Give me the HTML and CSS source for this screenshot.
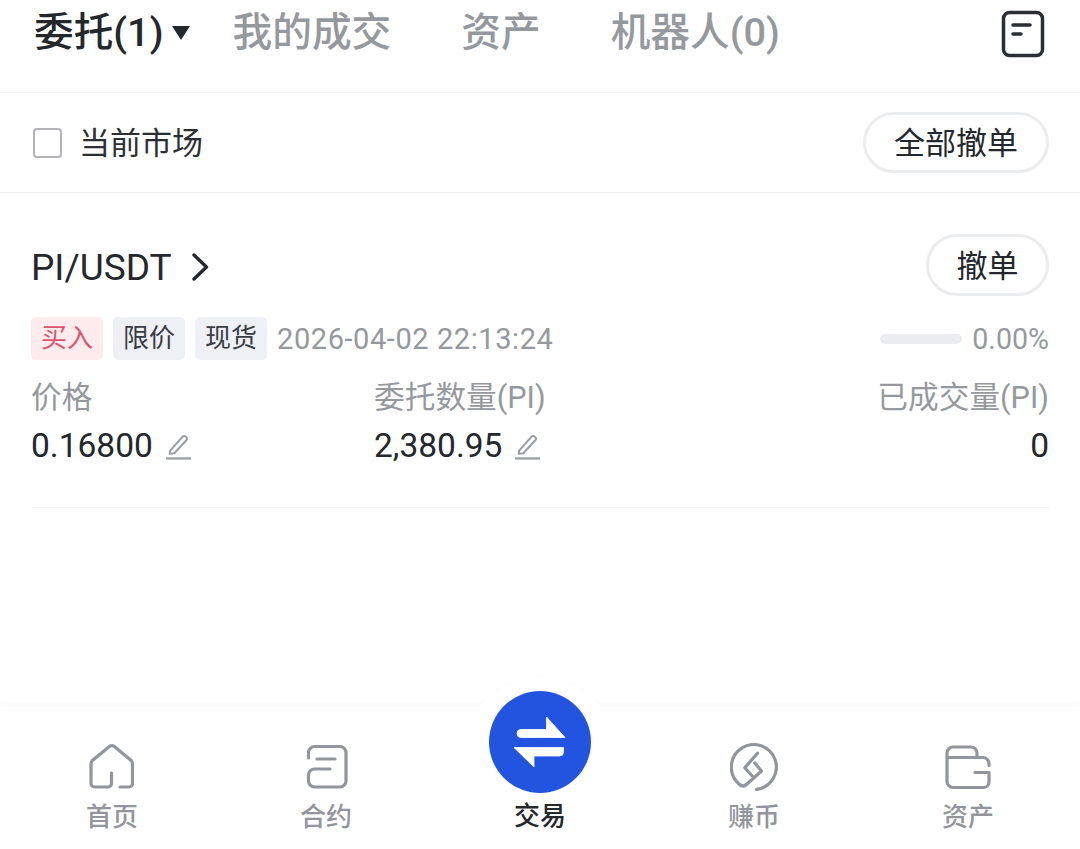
FILE: index.html
```html
<!DOCTYPE html>
<html lang="zh-CN">
<head>
    <meta charset="UTF-8">
    <meta name="viewport" content="width=device-width, initial-scale=1.0">
    <title>委托</title>
    <link rel="stylesheet" href="styles.css">
</head>
<body>
    <div class="page">
        <div class="tabs">
            <span class="tab active">委托(1)</span>
            <span class="caret"></span>
            <span class="tab">我的成交</span>
            <span class="tab">资产</span>
            <span class="tab">机器人(0)</span>
            <svg class="order-icon" width="44" height="48" viewBox="0 0 44 48">
                <rect x="2.5" y="2.5" width="39" height="43" rx="6" fill="none" stroke="#2b2e33" stroke-width="3.5"/>
                <path d="M12 15 H29 M12 24 H20" fill="none" stroke="#2b2e33" stroke-width="3.5" stroke-linecap="round"/>
            </svg>
        </div>

        <div class="filter">
            <label class="check"><span class="box"></span>当前市场</label>
            <button class="pill pill-all" type="button">全部撤单</button>
        </div>

        <div class="order">
            <div class="order-head">
                <div class="pair">PI/USDT
                    <svg width="18" height="30" viewBox="0 0 18 30"><path d="M3 3 L15.500 15 L3 27" fill="none" stroke="#24272c" stroke-width="3.400" stroke-linecap="round" stroke-linejoin="round"/></svg>
                </div>
                <button class="pill pill-cancel" type="button">撤单</button>
            </div>

            <div class="order-meta">
                <span class="tag tag-buy">买入</span>
                <span class="tag">限价</span>
                <span class="tag">现货</span>
                <span class="date">2026-04-02 22:13:24</span>
                <span class="progress"></span>
                <span class="percent">0.00%</span>
            </div>

            <div class="order-grid">
                <div class="cell">
                    <div class="label">价格</div>
                    <div class="value">0.16800
                        <svg class="edit" width="27" height="27" viewBox="0 0 26 26"><path d="M5 17 L17 3.500 a2 2 0 0 1 3 0 l0.500 0.500 a2 2 0 0 1 0 3 L9 19.500 L4.500 20 Z" fill="none" stroke="#9a9ea3" stroke-width="2" stroke-linejoin="round"/><path d="M1 24.500 H25" stroke="#9a9ea3" stroke-width="2.200"/></svg>
                    </div>
                </div>
                <div class="cell">
                    <div class="label">委托数量(PI)</div>
                    <div class="value">2,380.95
                        <svg class="edit" width="27" height="27" viewBox="0 0 26 26"><path d="M5 17 L17 3.500 a2 2 0 0 1 3 0 l0.500 0.500 a2 2 0 0 1 0 3 L9 19.500 L4.500 20 Z" fill="none" stroke="#9a9ea3" stroke-width="2" stroke-linejoin="round"/><path d="M1 24.500 H25" stroke="#9a9ea3" stroke-width="2.200"/></svg>
                    </div>
                </div>
                <div class="cell cell-right">
                    <div class="label">已成交量(PI)</div>
                    <div class="value">0</div>
                </div>
            </div>
        </div>

        <nav class="nav">
            <a class="nav-item">
                <svg width="48" height="48" viewBox="0 0 48 48"><path d="M32 44 H41 a3.500 3.500 0 0 0 3.500-3.500 V21 a5 5 0 0 0-1.400-3.600 L26.400 3.600 a4 4 0 0 0-5 0 L4.400 17.400 A5 5 0 0 0 3 21 V40.500 a3.500 3.500 0 0 0 3.500 3.500 H20 a3.500 3.500 0 0 0 3.500-3.500 V30" fill="none" stroke="#92959b" stroke-width="3.200" stroke-linecap="round"/></svg>
                <span>首页</span>
            </a>
            <a class="nav-item">
                <svg class="icon-contract" width="48" height="48" viewBox="0 0 48 48"><path d="M4.500 15 V9.500 a6 6 0 0 1 6-6 H36 a6 6 0 0 1 6 6 V38 a6 6 0 0 1-6 6 H10.500 a6 6 0 0 1-6-6 V32 a6 6 0 0 1 6-6 H26 M13 16 H31" fill="none" stroke="#92959b" stroke-width="3.200" stroke-linecap="round"/></svg>
                <span>合约</span>
            </a>
            <a class="nav-item nav-trade">
                <span class="trade-btn">
                    <svg width="56" height="56" viewBox="0 0 56 56"><path d="M9 15.500 H34.500 V3 L53 23.500 H9 a4 4 0 0 1 0-8 Z M51.500 33.500 V38 a4 4 0 0 1-4 4 H22 V53 L2 33.500 Z" fill="#fff" stroke="#fff" stroke-width="0.800" stroke-linejoin="round"/></svg>
                </span>
                <span>交易</span>
            </a>
            <a class="nav-item">
                <svg width="48" height="48" viewBox="0 0 48 48"><path d="M26.500 46.400 A22.500 22.500 0 1 0 9 41 Q13 45 17 41 L31.500 28 L24.800 20 M27.500 10.300 L14.800 24.700 L22.200 33" fill="none" stroke="#92959b" stroke-width="3.200" stroke-linecap="round" stroke-linejoin="round"/></svg>
                <span>赚币</span>
            </a>
            <a class="nav-item">
                <svg width="48" height="48" viewBox="0 0 48 48"><path d="M31 29.500 H45 V39 a5.500 5.500 0 0 1-5.500 5.500 H9 a6 6 0 0 1-6-6 V10 a6 6 0 0 1 6-6 H27 a6 6 0 0 1 6 6 V14 M3 14.500 H39 a6 6 0 0 1 6 6 V22.500" fill="none" stroke="#92959b" stroke-width="3.200" stroke-linecap="round" stroke-linejoin="round"/></svg>
                <span>资产</span>
            </a>
        </nav>
    </div>
</body>
</html>
```

FILE: styles.css
```css
* {
    box-sizing: border-box;
}
html, body {
    margin: 0;
    height: 100%;
}
body {
    background: #fff;
    color: #24272c;
    font-family: Roboto, "Noto Sans CJK SC", sans-serif;
}
.page {
    height: 849px;
    display: flex;
    flex-direction: column;
    overflow: hidden;
}

/* top tabs */
.tabs {
    height: 93px;
    flex: none;
    display: flex;
    align-items: center;
    padding: 0 34px 36px;
    border-bottom: 1px solid #eeeff0;
}
.tab {
    font-size: 39.700px;
    font-weight: 500;
    color: #95999d;
    white-space: nowrap;
    margin-right: 70px;
}
.tab.active {
    color: #24272c;
    margin-right: 8px;
}
.caret {
    width: 0;
    height: 0;
    border-left: 9px solid transparent;
    border-right: 9px solid transparent;
    border-top: 14px solid #24272c;
    margin-top: 10px;
    margin-right: 43px;
}
.order-icon {
    margin-left: auto;
    margin-right: 1px;
    margin-top: 12px;
}

/* filter row */
.filter {
    height: 100px;
    flex: none;
    display: flex;
    align-items: center;
    justify-content: space-between;
    padding: 0 31px 0 33px;
    border-bottom: 1px solid #eeeff0;
}
.check {
    display: flex;
    align-items: center;
    font-size: 31px;
    color: #2b2e33;
    padding-bottom: 4px;
}
.box {
    width: 29px;
    height: 30px;
    border: 2px solid #b1b3b6;
    border-radius: 4px;
    margin-top: 4px;
    margin-right: 17px;
}
.pill {
    font-family: inherit;
    font-size: 31px;
    color: #24272c;
    background: #fff;
    border: 3px solid #ebecee;
    border-radius: 31px;
    height: 61px;
    padding: 0 0 4px;
}
.pill-all {
    width: 186px;
}
.pill-cancel {
    width: 123px;
    height: 62px;
}

/* order card */
.order {
    margin: 0 31px 0 32px;
    height: 315px;
    flex: none;
    border-bottom: 1px solid #eeeff0;
}
.order-head {
    display: flex;
    align-items: center;
    justify-content: space-between;
    padding-top: 41px;
}
.pair {
    display: flex;
    align-items: center;
    gap: 19px;
    font-size: 37px;
    padding-top: 4px;
    margin-left: -1px;
}
.order-meta {
    display: flex;
    align-items: center;
    margin-top: 21px;
    margin-left: -1px;
}
.tag {
    width: 72px;
    height: 43px;
    line-height: 42px;
    text-align: center;
    font-size: 26px;
    border-radius: 5px;
    background: #eef0f6;
    color: #3a3d45;
    margin-right: 10px;
}
.tag-buy {
    background: #fdebee;
    color: #dc5570;
}
.date {
    font-size: 29px;
    letter-spacing: 0.580px;
    color: #95999d;
}
.progress {
    width: 82px;
    height: 10px;
    border-radius: 5px;
    background: #ebecf0;
    margin-left: auto;
    margin-right: 10px;
}
.percent {
    font-size: 28.600px;
    color: #95999d;
}
.order-grid {
    display: flex;
    margin-top: 16px;
}
.cell {
    flex: 0 0 343px;
}
.cell-right {
    flex: 1;
    text-align: right;
}
.label {
    font-size: 30.700px;
    line-height: 44px;
    color: #95999d;
    margin-left: -1px;
}
.value {
    display: flex;
    align-items: center;
    gap: 12px;
    font-size: 33.500px;
    line-height: 46px;
    margin-top: 3px;
    margin-left: -1px;
}
.cell-right .value {
    justify-content: flex-end;
}

/* bottom nav */
.nav {
    position: relative;
    z-index: 0;
    margin-top: auto;
    height: 142px;
    flex: none;
    display: flex;
    padding: 36px 5px 0;
    background: #fff;
    box-shadow: 0 -5px 3px #fbfbfb;
}
.nav-item {
    flex: 1;
    display: flex;
    flex-direction: column;
    align-items: center;
    font-size: 26px;
    font-weight: 500;
    line-height: 36px;
    color: #92959b;
}
.nav-item svg {
    display: block;
    margin-bottom: 8px;
}
.nav-item .icon-contract {
    margin-left: 4px;
}
.nav-trade {
    color: #24272c;
}
.trade-btn {
    position: relative;
    width: 102px;
    height: 102px;
    border-radius: 50%;
    background: #2354e0;
    display: flex;
    align-items: center;
    justify-content: center;
    margin-top: -52px;
    margin-bottom: 5px;
}
.trade-btn svg {
    margin-bottom: 0;
}
/* faint bump behind the round button */
.trade-btn::before {
    content: "";
    position: absolute;
    z-index: -1;
    left: -29px;
    top: -13px;
    width: 160px;
    height: 160px;
    border-radius: 50%;
    background: #fff;
    box-shadow: 0 -2px 3px rgba(0, 0, 0, 0.012);
}
```
